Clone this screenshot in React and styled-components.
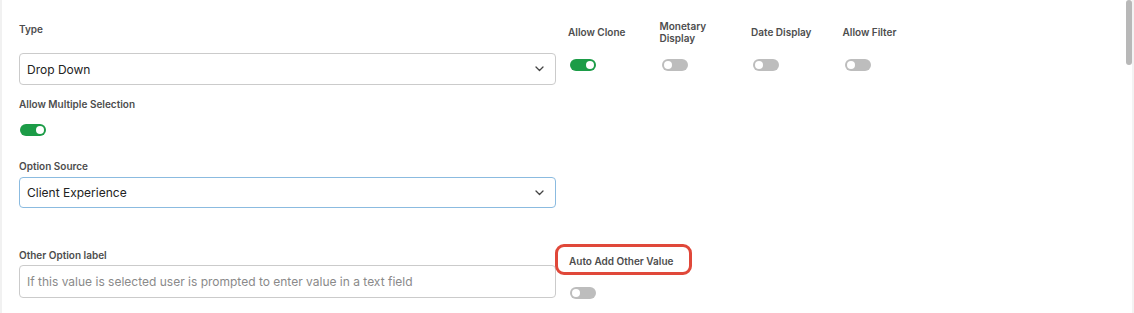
import React from "react";
import styled, { createGlobalStyle } from "styled-components";

const GlobalStyle = createGlobalStyle`
  html, body {
    margin: 0;
    padding: 0;
    background: #fff;
  }
  body {
    font-family: Inter, "Noto Sans", "Liberation Sans", sans-serif;
    -webkit-font-smoothing: antialiased;
  }
`;

const Page = styled.div`
  position: relative;
  height: 313px;
  overflow: hidden;
  box-sizing: border-box;
  border-left: 2px solid #f1f1f1;
  padding-left: 17px;
  display: flex;
  gap: 12px;
`;

const LeftColumn = styled.div`
  width: 537px;
  display: flex;
  flex-direction: column;
  padding-top: 23px;
`;

const RightColumn = styled.div`
  display: flex;
  flex-direction: column;
  padding-top: 20px;
`;

const Label = styled.div`
  font-size: 10px;
  line-height: 12px;
  font-weight: 600;
  color: #4d4d4d;
  margin-top: ${({ $top }) => $top || 0}px;
`;

const Select = styled.div`
  height: ${({ $height }) => $height || 32}px;
  box-sizing: border-box;
  margin-top: ${({ $top }) => $top || 0}px;
  border: 1px solid ${({ $focused }) => ($focused ? "#8bbbe0" : "#cbcbcb")};
  border-radius: 4px;
  display: flex;
  align-items: center;
  justify-content: space-between;
  padding: 0 11px 0 7px;
  font-size: 12px;
  color: ${({ $placeholder }) => ($placeholder ? "#8a8a8a" : "#222")};
`;

const ToggleTrack = styled.div`
  width: 26px;
  height: 12px;
  border-radius: 6px;
  box-sizing: border-box;
  margin-top: ${({ $top }) => $top || 0}px;
  margin-left: ${({ $left }) => $left || 1}px;
  background: ${({ $on }) => ($on ? "#1c9c47" : "#bdbdbd")};
  display: flex;
  align-items: center;
  justify-content: ${({ $on }) => ($on ? "flex-end" : "flex-start")};
  padding: 0 2px;
`;

const Knob = styled.div`
  width: 8px;
  height: 8px;
  border-radius: 50%;
  background: #fff;
`;

const FlagRow = styled.div`
  display: flex;
`;

const Flag = styled.div`
  width: 91.5px;
  display: flex;
  flex-direction: column;
`;

const FlagLabel = styled.div`
  height: 24px;
  display: flex;
  align-items: center;
  font-size: 10px;
  line-height: 12px;
  font-weight: 600;
  color: #4d4d4d;
  width: 68px;
`;

const Highlight = styled.div`
  margin-top: 173px;
  margin-left: -13px;
  width: 137px;
  height: 31px;
  box-sizing: border-box;
  border: 3px solid #e0483a;
  border-radius: 9px;
  display: flex;
  align-items: center;
  padding: 3px 0 0 11px;
  font-size: 10px;
  font-weight: 600;
  color: #4d4d4d;
`;

const Scrollbar = styled.div`
  position: absolute;
  top: 0;
  right: 2px;
  width: 6px;
  height: 65px;
  border-radius: 3px;
  background: #b8b8b8;
`;

const ScrollTrack = styled.div`
  position: absolute;
  top: 0;
  right: 0;
  width: 2px;
  height: 100%;
  background: #f3f3f3;
`;

function Chevron() {
  return (
    <svg width="9" height="6" viewBox="0 0 9 6" fill="none">
      <path d="M1 1l3.5 3.5L8 1" stroke="#444" strokeWidth="1.3" strokeLinecap="round" strokeLinejoin="round" />
    </svg>
  );
}

function Toggle({ on, top, left }) {
  return (
    <ToggleTrack $on={on} $top={top} $left={left}>
      <Knob />
    </ToggleTrack>
  );
}

const flags = [
  { label: "Allow Clone", on: true },
  { label: "Monetary Display", on: false },
  { label: "Date Display", on: false },
  { label: "Allow Filter", on: false }
];

export default function App() {
  return (
    <>
      <GlobalStyle />
      <Page>
        <LeftColumn>
          <Label>Type</Label>
          <Select $top={18}>
            Drop Down
            <Chevron />
          </Select>
          <Label $top={13}>Allow Multiple Selection</Label>
          <Toggle on top={14} />
          <Label $top={24}>Option Source</Label>
          <Select $top={5} $height={31} $focused>
            Client Experience
            <Chevron />
          </Select>
          <Label $top={41}>Other Option label</Label>
          <Select $top={4} $height={33} $placeholder>
            If this value is selected user is prompted to enter value in a text field
          </Select>
        </LeftColumn>
        <RightColumn>
          <FlagRow>
            {flags.map((f) => (
              <Flag key={f.label}>
                <FlagLabel>{f.label}</FlagLabel>
                <Toggle on={f.on} top={15} left={2} />
              </Flag>
            ))}
          </FlagRow>
          <Highlight>Auto Add Other Value</Highlight>
          <Toggle on={false} top={12} left={2} />
        </RightColumn>
        <Scrollbar />
        <ScrollTrack />
      </Page>
    </>
  );
}
